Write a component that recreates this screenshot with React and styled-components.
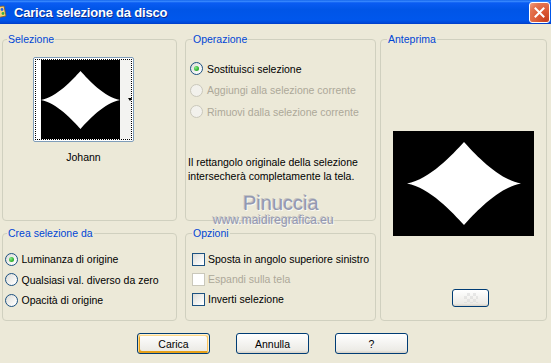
import React from 'react';
import styled, { createGlobalStyle } from 'styled-components';

const Global = createGlobalStyle`
  html, body { margin: 0; padding: 0; background: #ECE9D8; }
  body { width: 551px; height: 363px; overflow: hidden; font-family: "Liberation Sans", Arial, sans-serif; }
`;

const Window = styled.div`
  position: relative;
  width: 551px;
  height: 363px;
  background: #ECE9D8;
  display: flex;
  flex-direction: column;
  overflow: hidden;
  font-family: "Liberation Sans", Arial, sans-serif;
  font-size: 10.5px;
  color: #000;
`;

const TitleBar = styled.div`
  flex: none;
  height: 24px;
  display: flex;
  align-items: center;
  padding-right: 1px;
  background: linear-gradient(180deg, #0b5de8 0%, #3c8dff 5%, #0a5cf2 12%, #0055e7 40%, #0057ec 82%, #0049da 94%, #003cc6 100%);
  color: #fff;
  overflow: hidden;
`;

const AppIcon = styled.svg`
  flex: none;
  margin-left: -8px;
  width: 16px;
  height: 16px;
`;

const TitleText = styled.span`
  flex: 1;
  margin-left: 6px;
  font: bold 13px "Liberation Sans", Arial, sans-serif;
  letter-spacing: -0.2px;
  text-shadow: 1px 1px 0 #0b2a8a;
  white-space: nowrap;
`;

const CloseBtn = styled.div`
  flex: none;
  width: 21px;
  height: 21px;
  box-sizing: border-box;
  border: 1px solid #fff;
  border-radius: 3px;
  background: radial-gradient(circle at 85% 90%, #c8401f 0%, #dc5a35 40%, #e47551 75%, #f0a083 100%);
  display: flex;
  align-items: center;
  justify-content: center;
`;

const Body = styled.div`
  padding: 9px 0 0 2px;
  display: flex;
  flex-direction: column;
`;

const Grid = styled.div`
  display: grid;
  grid-template-columns: 175px 8px 191px 4px 167px;
  grid-template-rows: 188px 94px;
  row-gap: 6px;
`;

const Group = styled.fieldset`
  grid-column: ${p => p.$col};
  grid-row: ${p => p.$row};
  margin: 0;
  padding: 0;
  min-width: 0;
  border: 1px solid #D0D0BF;
  border-radius: 4px;
  box-sizing: border-box;
`;

const Legend = styled.legend`
  margin-left: ${p => p.$indent}px;
  padding: 0 1px;
  color: #0046D5;
  font-size: 10.5px;
  line-height: 13px;
`;

const SelContent = styled.div`
  display: flex;
  flex-direction: column;
  align-items: center;
  padding: 11px 12px 0 0;
`;

const Thumb = styled.div`
  width: 101px;
  height: 85px;
  box-sizing: border-box;
  border: 1px solid #7F9DB9;
  border-radius: 2px;
  padding: 1px;
  background: #fff;
`;

const ThumbFocus = styled.div`
  height: 100%;
  box-sizing: border-box;
  border: 1px dotted #000;
  display: flex;
`;

const ThumbMargin = styled.div`
  width: 5px;
  background: #fff;
`;

const ThumbImage = styled.div`
  width: 79px;
  background: #000;
  display: flex;
  align-items: center;
  justify-content: center;
`;

const ThumbStrip = styled.div`
  flex: 1;
  background: #F3F3F1;
  display: flex;
  align-items: center;
  justify-content: flex-end;
  padding-right: 0;
`;

const Arrow = styled.div`
  width: 0;
  height: 0;
  margin-right: -1px;
  border-left: 2.5px solid transparent;
  border-right: 2.5px solid transparent;
  border-top: 3px solid #000;
`;

const Caption = styled.div`
  margin-top: 9px;
  line-height: 13px;
`;

const OptionList = styled.div`
  display: flex;
  flex-direction: column;
  padding: ${p => p.$top}px 0 0 ${p => p.$left}px;
`;

const OptionRow = styled.div`
  display: flex;
  align-items: center;
  gap: ${p => p.$gap}px;
  height: ${p => p.$h}px;
  color: ${p => (p.$disabled ? '#ACA899' : '#000')};
  white-space: nowrap;
`;

const RadioDot = styled.span`
  flex: none;
  width: 13px;
  height: 13px;
  box-sizing: border-box;
  border-radius: 50%;
  border: 1px solid ${p => (p.$disabled ? '#CAC8BB' : '#1C5180')};
  background: ${p => (p.$disabled ? '#F2F1EC' : 'linear-gradient(135deg, #DCDCD7 0%, #FFFFFF 90%)')};
  display: flex;
  align-items: center;
  justify-content: center;
  &::after {
    content: '';
    display: ${p => (p.$checked ? 'block' : 'none')};
    width: 5px;
    height: 5px;
    border-radius: 50%;
    background: radial-gradient(circle at 35% 35%, #8CEB8C 0%, #3DBD3D 50%, #1A8F1A 100%);
  }
`;

const CheckBox = styled.span`
  flex: none;
  width: 13px;
  height: 13px;
  box-sizing: border-box;
  border: 1px solid ${p => (p.$disabled ? '#CAC8BB' : '#1C5180')};
  background: ${p => (p.$disabled ? '#FFFFFF' : 'linear-gradient(135deg, #DCDCD7 0%, #FFFFFF 90%)')};
`;

const Description = styled.div`
  margin-top: 32px;
  padding-left: 2px;
  line-height: 14px;
`;

const PreviewContent = styled.div`
  display: flex;
  flex-direction: column;
  align-items: center;
`;

const PreviewBox = styled.div`
  margin-top: 85px;
  width: 141px;
  height: 105px;
  background: #000;
  display: flex;
  align-items: center;
  justify-content: center;
`;

const MiniButton = styled.div`
  margin-top: 53px;
  margin-left: 14px;
  width: 37px;
  height: 18px;
  box-sizing: border-box;
  border: 1px solid #003C74;
  border-radius: 3px;
  background: linear-gradient(180deg, #FFFFFF 0%, #ECEBE6 86%, #D6D0C5 100%);
  display: flex;
  align-items: center;
  justify-content: center;
`;

const Checker = styled.div`
  width: 14px;
  height: 10px;
  opacity: 0.55;
  background:
    linear-gradient(45deg, #d9d9d9 25%, transparent 25%, transparent 75%, #d9d9d9 75%),
    linear-gradient(45deg, #d9d9d9 25%, transparent 25%, transparent 75%, #d9d9d9 75%);
  background-size: 6px 6px;
  background-position: 0 0, 3px 3px;
`;

const Footer = styled.div`
  display: flex;
  gap: 26px;
  margin-top: 12px;
  padding-left: 135px;
`;

const Button = styled.div`
  width: 73px;
  height: 21px;
  box-sizing: border-box;
  border: 1px solid #003C74;
  border-radius: 3px;
  background: linear-gradient(180deg, #FFFFFF 0%, #ECEBE6 86%, #D6D0C5 100%);
  box-shadow: ${p =>
    p.$default
      ? 'inset -1px 1px #FFF0CF, inset 1px 2px #FDD889, inset -2px 2px #FBC761, inset 2px -2px #E5A01A'
      : 'none'};
  display: flex;
  align-items: center;
  justify-content: center;
  font-size: 10.5px;
  color: #000;
`;

const Watermark = styled.div`
  position: absolute;
  left: ${p => p.$x}px;
  top: ${p => p.$y}px;
  font-family: "Liberation Sans", Arial, sans-serif;
  font-size: ${p => p.$size}px;
  line-height: 1;
  color: #9398B2;
  letter-spacing: ${p => p.$spacing}px;
  text-shadow: 1px 1px 0 rgba(255, 255, 255, 0.7), -1px -1px 0 rgba(120, 125, 150, 0.35);
  white-space: nowrap;
  pointer-events: none;
`;

const STAR = 'M50 0 C60 15 80 45 100 50 C80 55 60 85 50 100 C40 85 20 55 0 50 C20 45 40 15 50 0 Z';

function Star({ w, h }) {
  return (
    <svg width={w} height={h} viewBox="0 0 100 100" preserveAspectRatio="none">
      <path d={STAR} fill="#fff" />
    </svg>
  );
}

function Radio({ label, checked, disabled, gap = 4, h }) {
  return (
    <OptionRow $gap={gap} $h={h} $disabled={disabled}>
      <RadioDot $checked={checked} $disabled={disabled} />
      <span>{label}</span>
    </OptionRow>
  );
}

function Check({ label, disabled }) {
  return (
    <OptionRow $gap={3} $h={20} $disabled={disabled}>
      <CheckBox $disabled={disabled} />
      <span>{label}</span>
    </OptionRow>
  );
}

export default function App() {
  return (
    <>
      <Global />
      <Window>
        <TitleBar>
          <AppIcon viewBox="0 0 16 16">
            <path d="M2 3 L12 2 L14 12 L4 14 Z" fill="#F4D37A" stroke="#8A5A1C" strokeWidth="0.8" />
            <circle cx="6" cy="6" r="1.6" fill="#E23A2A" />
            <circle cx="10" cy="5.5" r="1.4" fill="#2A62E2" />
            <circle cx="11" cy="9.5" r="1.4" fill="#3CB043" />
            <circle cx="6.5" cy="10.5" r="1.4" fill="#F07A1E" />
          </AppIcon>
          <TitleText>Carica selezione da disco</TitleText>
          <CloseBtn>
            <svg width="11" height="11" viewBox="0 0 11 11">
              <path d="M1.5 1.5 L9.5 9.5 M9.5 1.5 L1.5 9.5" stroke="#fff" strokeWidth="2" strokeLinecap="square" />
            </svg>
          </CloseBtn>
        </TitleBar>
        <Body>
          <Grid>
            <Group $col={1} $row={1}>
              <Legend $indent={4}>Selezione</Legend>
              <SelContent>
                <Thumb>
                  <ThumbFocus>
                    <ThumbMargin />
                    <ThumbImage>
                      <Star w={79} h={58} />
                    </ThumbImage>
                    <ThumbStrip>
                      <Arrow />
                    </ThumbStrip>
                  </ThumbFocus>
                </Thumb>
                <Caption>Johann</Caption>
              </SelContent>
            </Group>

            <Group $col={3} $row={1}>
              <Legend $indent={6}>Operazione</Legend>
              <OptionList $top={12} $left={4}>
                <Radio h={21.5} checked label="Sostituisci selezione" />
                <Radio h={21.5} disabled label="Aggiungi alla selezione corrente" />
                <Radio h={21.5} disabled label="Rimuovi dalla selezione corrente" />
              </OptionList>
              <Description>
                Il rettangolo originale della selezione
                <br />
                intersecherà completamente la tela.
              </Description>
            </Group>

            <Group $col={5} $row="1 / span 2">
              <Legend $indent={6}>Anteprima</Legend>
              <PreviewContent>
                <PreviewBox>
                  <Star w={114} h={83} />
                </PreviewBox>
                <MiniButton>
                  <Checker />
                </MiniButton>
              </PreviewContent>
            </Group>

            <Group $col={1} $row={2}>
              <Legend $indent={4}>Crea selezione da</Legend>
              <OptionList $top={9} $left={1.5}>
                <Radio h={20.5} checked label="Luminanza di origine" />
                <Radio h={20.5} label="Qualsiasi val. diverso da zero" />
                <Radio h={20.5} label="Opacità di origine" />
              </OptionList>
            </Group>

            <Group $col={3} $row={2}>
              <Legend $indent={6}>Opzioni</Legend>
              <OptionList $top={9} $left={6}>
                <Check label="Sposta in angolo superiore sinistro" />
                <Check disabled label="Espandi sulla tela" />
                <Check label="Inverti selezione" />
              </OptionList>
            </Group>
          </Grid>
          <Footer>
            <Button $default>Carica</Button>
            <Button>Annulla</Button>
            <Button>?</Button>
          </Footer>
        </Body>
        <Watermark $x={243} $y={193} $size={20} $spacing={0}>Pinuccia</Watermark>
        <Watermark $x={213} $y={214} $size={12} $spacing={0}>www.maidiregrafica.eu</Watermark>
      </Window>
    </>
  );
}
